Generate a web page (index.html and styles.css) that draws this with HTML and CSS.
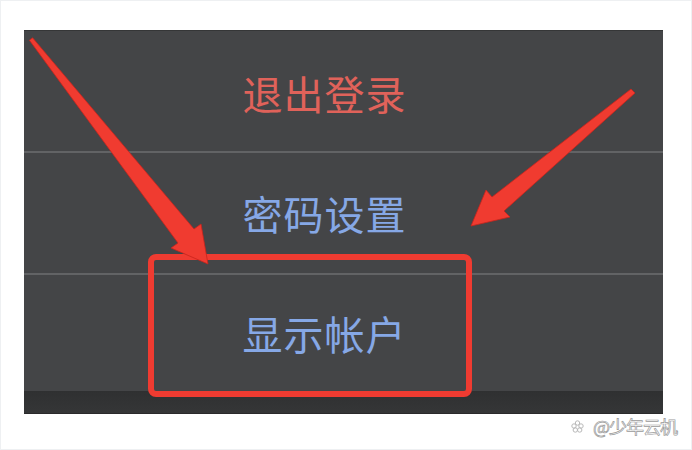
FILE: index.html
```html
<!DOCTYPE html>
<html lang="zh-CN">
<head>
  <meta charset="UTF-8">
  <title>账户菜单</title>
  <link rel="stylesheet" href="styles.css">
</head>
<body>

  <div class="frame">
    <div class="panel">
      <div class="menu">
        <div class="row row-first"><span class="item item-danger">退出登录</span></div>
        <div class="row"><span class="item">密码设置</span></div>
        <div class="row row-last"><span class="item">显示帐户</span></div>
      </div>
      <div class="panel-foot"></div>
    </div>

    <div class="mark">
      <svg class="mark-icon" width="13" height="13" viewBox="0 0 13 13">
        <g fill="none" stroke="#b9b9b9" stroke-width="1">
          <circle cx="6.5" cy="3" r="2.2"/>
          <circle cx="3" cy="6" r="2.2"/>
          <circle cx="10" cy="6" r="2.2"/>
          <circle cx="4.3" cy="10" r="2.2"/>
          <circle cx="8.7" cy="10" r="2.2"/>
        </g>
      </svg>
      <span class="mark-text">@少年云机</span>
    </div>

    <!-- 标注：红框和两个箭头 -->
    <div class="highlight"></div>
    <svg class="arrows" width="692" height="450" viewBox="0 0 692 450">
      <g fill="#f03b30" stroke="#c8251d" stroke-width="0.8" stroke-linejoin="round">
        <polygon points="31.6,36.8 193,228 200,223 207,263 170,247 177,242 28.4,39.2"/>
        <polygon points="634,92 503,210 509,216 470,225 485,189 491,196 630,88"/>
      </g>
    </svg>
  </div>

</body>
</html>
```

FILE: styles.css
```css
body {
  margin: 0;
  background-color: #fff;
  font-family: "Noto Sans CJK SC", "Noto Sans", sans-serif;
}

.frame {
  position: relative;
  box-sizing: border-box;
  width: 692px;
  height: 450px;
  border: 1px solid #eef0f2;
  overflow: hidden;
}

.panel {
  margin: 29px 0 0 23px;
  width: 639px;
  background-color: #444547;
  border-top: 1px solid #353637;
}

.menu {
  display: flex;
  flex-direction: column;
}

.row {
  display: flex;
  align-items: center;
  justify-content: center;
  height: 120px;
  padding-right: 38px;
}

.row-first {
  height: 122px;
  padding-top: 4px;
  box-sizing: border-box;
  border-bottom: 2px solid #626365;
}

.row-last {
  height: 116px;
  border-top: 2px solid #626365;
}

.item {
  font-size: 40px;
  line-height: 1;
  color: #86a8e6;
  letter-spacing: 1px;
}

.item-danger {
  color: #e0625a;
}

.panel-foot {
  height: 22px;
  background: linear-gradient(#2f3031, #353637);
  border-bottom: 1px solid #2a2a2b;
}

.mark {
  display: flex;
  align-items: center;
  justify-content: flex-end;
  gap: 9px;
  padding-right: 14px;
  margin-top: 1px;
}

.mark-text {
  font-size: 18px;
  line-height: 22px;
  color: #fff;
  -webkit-text-stroke: 0.7px #9a9a9a;
  letter-spacing: -1px;
}

.highlight {
  position: absolute;
  left: 147px;
  top: 253px;
  width: 324px;
  height: 143px;
  box-sizing: border-box;
  border: 6px solid #ef3b31;
  border-radius: 8px;
}

.arrows {
  position: absolute;
  left: 0;
  top: 0;
  pointer-events: none;
}
```
